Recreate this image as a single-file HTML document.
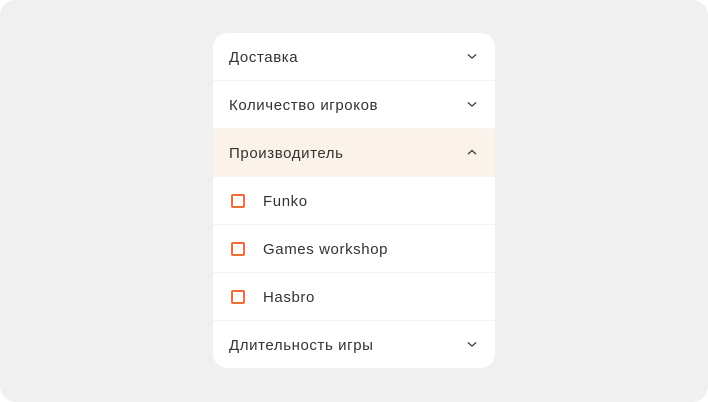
<!DOCTYPE html>
<html><head><meta charset="utf-8"><style>
html,body{margin:0;padding:0;background:#fff;}
.page{width:708px;height:402px;background:#f0f0f0;border-radius:16px;position:relative;overflow:hidden;font-family:"Liberation Sans",sans-serif;}
.card{position:absolute;left:213px;top:33px;width:282px;height:335px;background:#fff;border-radius:14px;overflow:hidden;}
.row{position:relative;height:47px;border-bottom:1px solid #f2f4f4;font-size:15px;color:#333;}
.row:last-child{border-bottom:none;}
.row.act{background:#fbf2e9;border-bottom:none;height:48px;}
.t{position:absolute;left:16px;top:1px;line-height:48px;letter-spacing:0.6px;}
.o .t{left:50px;}
.cb{position:absolute;left:18px;top:17px;width:10px;height:10px;border:2px solid #f36c37;border-radius:2px;}
svg{position:absolute;left:254px;top:20px;}
</style></head><body><div class="page"><div class="card">
<div class="row"><span class="t">Доставка</span><svg width="10" height="7" viewBox="0 0 10 7"><path d="M1 1.5L5 5.2L9 1.5" fill="none" stroke="#333" stroke-width="1.2"/></svg></div>
<div class="row"><span class="t">Количество игроков</span><svg width="10" height="7" viewBox="0 0 10 7"><path d="M1 1.5L5 5.2L9 1.5" fill="none" stroke="#333" stroke-width="1.2"/></svg></div>
<div class="row act"><span class="t">Производитель</span><svg width="10" height="7" viewBox="0 0 10 7"><path d="M1 5.2L5 1.5L9 5.2" fill="none" stroke="#333" stroke-width="1.2"/></svg></div>
<div class="row o"><span class="cb"></span><span class="t">Funko</span></div>
<div class="row o"><span class="cb"></span><span class="t">Games workshop</span></div>
<div class="row o"><span class="cb"></span><span class="t">Hasbro</span></div>
<div class="row"><span class="t">Длительность игры</span><svg width="10" height="7" viewBox="0 0 10 7"><path d="M1 1.5L5 5.2L9 1.5" fill="none" stroke="#333" stroke-width="1.2"/></svg></div>
</div></div></body></html>
